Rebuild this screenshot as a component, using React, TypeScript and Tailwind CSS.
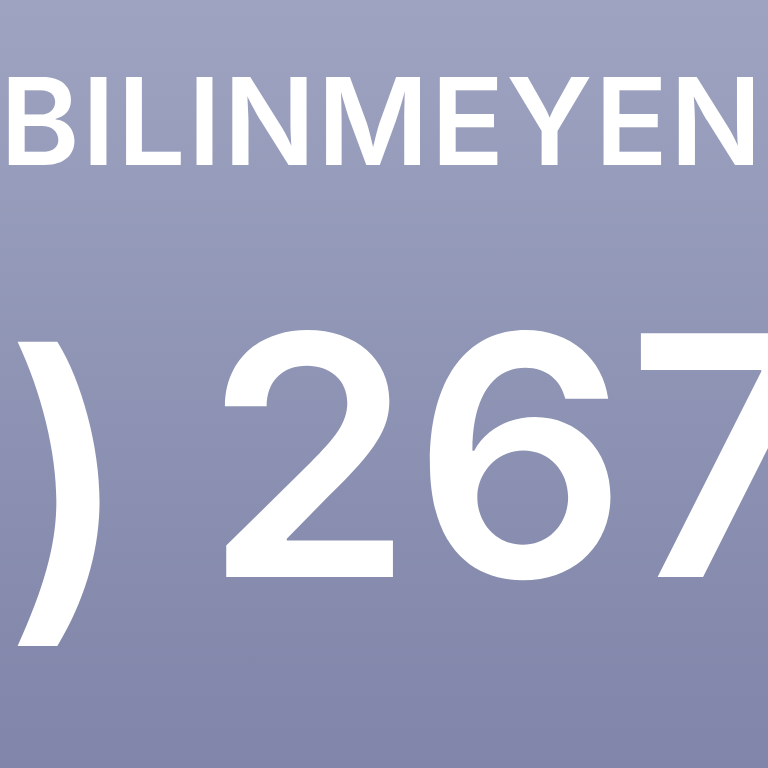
export default function App() {
  return (
    <div
      className="w-[768px] h-[768px] overflow-hidden bg-gradient-to-b from-[#9da3c0] to-[#8085a9] text-white flex flex-col"
      style={{ fontFamily: "Inter, 'Noto Sans', sans-serif" }}
    >
      <div className="pt-[61px] pl-0 whitespace-nowrap text-[121px] leading-[121px] font-semibold tracking-[0.017em]">
        BILINMEYEN
      </div>
      <div className="mt-[106px] pl-[5px] whitespace-nowrap text-[335px] leading-[335px] font-semibold tracking-[0em]">
        <span className="align-[-0.07em] tracking-[-0.03em]">)</span> 267
      </div>
    </div>
  );
}
